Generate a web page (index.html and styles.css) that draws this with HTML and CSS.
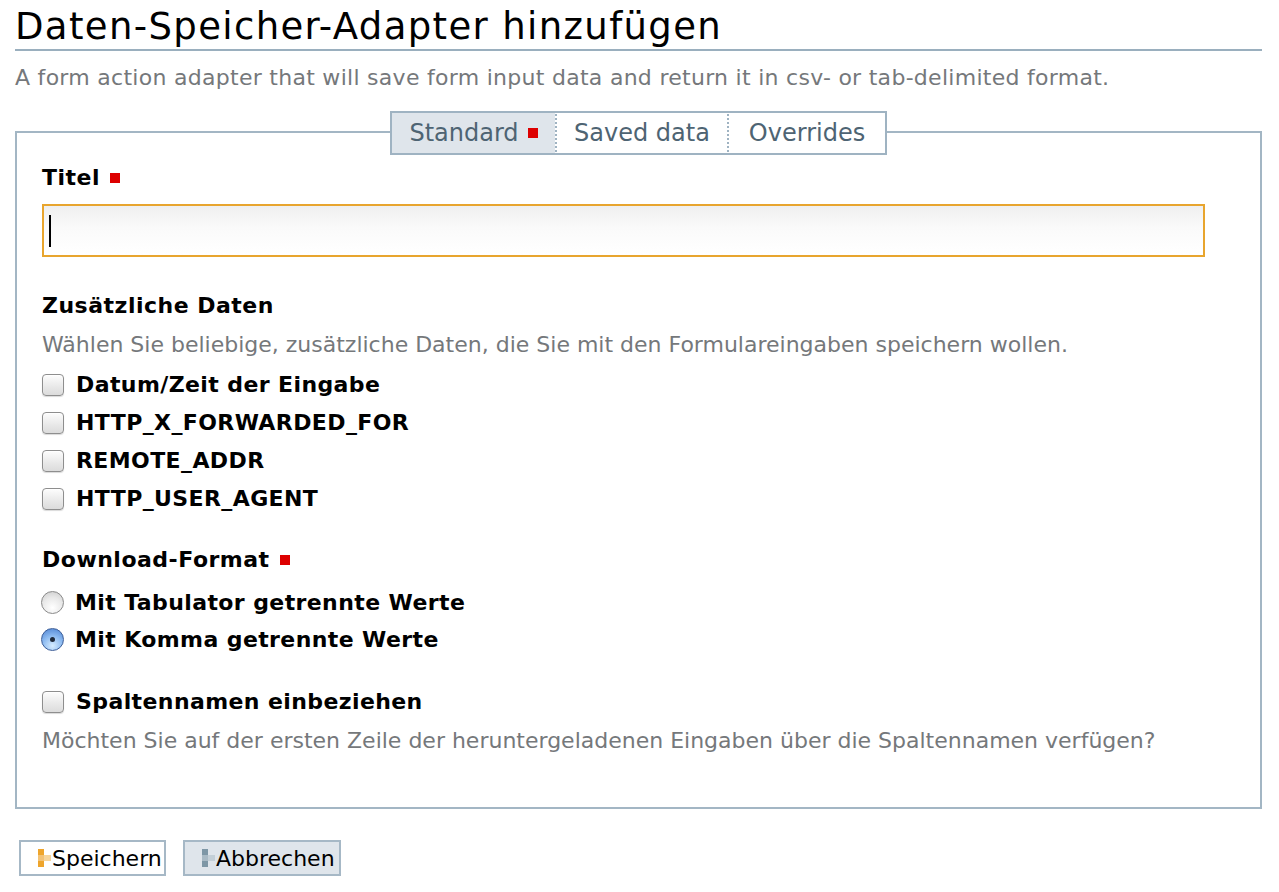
FILE: index.html
```html
<!DOCTYPE html>
<html lang="de">
<head>
<meta charset="utf-8">
<title>Daten-Speicher-Adapter hinzufügen</title>
<link rel="stylesheet" href="styles.css">
</head>
<body>
<h1 class="title">Daten-Speicher-Adapter hinzufügen</h1>
<p class="desc">A form action adapter that will save form input data and return it in csv- or tab-delimited format.</p>

<div class="panel">
  <div class="tabs">
    <span class="tab active">Standard<span class="req"></span></span>
    <span class="tab">Saved data</span>
    <span class="tab">Overrides</span>
  </div>

  <div class="field first">
    <label class="label">Titel <span class="req"></span></label>
    <div class="input"><span class="caret"></span></div>
  </div>

  <div class="field extra">
    <div class="label">Zusätzliche Daten</div>
    <div class="help">Wählen Sie beliebige, zusätzliche Daten, die Sie mit den Formulareingaben speichern wollen.</div>
    <div class="opts">
      <label class="opt"><span class="cb"></span>Datum/Zeit der Eingabe</label>
      <label class="opt"><span class="cb"></span>HTTP_X_FORWARDED_FOR</label>
      <label class="opt"><span class="cb"></span>REMOTE_ADDR</label>
      <label class="opt"><span class="cb"></span>HTTP_USER_AGENT</label>
    </div>
  </div>

  <div class="field format">
    <div class="label">Download-Format <span class="req"></span></div>
    <div class="opts radios">
      <label class="opt"><span class="rb"></span>Mit Tabulator getrennte Werte</label>
      <label class="opt"><span class="rb on"></span>Mit Komma getrennte Werte</label>
    </div>
  </div>

  <div class="field cols">
    <label class="opt"><span class="cb"></span>Spaltennamen einbeziehen</label>
    <div class="help">Möchten Sie auf der ersten Zeile der heruntergeladenen Eingaben über die Spaltennamen verfügen?</div>
  </div>
</div>

<div class="buttons">
  <button class="btn save">
    <svg class="ico" width="13" height="18" viewBox="0 0 13 18"><rect x="0" y="0" width="6" height="6" fill="#eea52c"/><rect x="0" y="6" width="6" height="6" fill="#f3c274"/><rect x="6" y="6" width="7" height="6" fill="#f6d59c"/><rect x="0" y="12" width="6" height="6" fill="#eea52c"/></svg>Speichern</button>
  <button class="btn cancel">
    <svg class="ico" width="13" height="18" viewBox="0 0 13 18"><rect x="0" y="0" width="6" height="6" fill="#7e97a6"/><rect x="0" y="6" width="6" height="6" fill="#a9bac5"/><rect x="6" y="6" width="7" height="6" fill="#c3cfd7"/><rect x="0" y="12" width="6" height="6" fill="#7e97a6"/></svg>Abbrechen</button>
</div>
</body>
</html>
```

FILE: styles.css
```css
html, body {
  margin: 0;
  padding: 0;
  background: #fff;
}
body {
  padding: 0 17px 0 15px;
  font-family: "DejaVu Sans", Verdana, sans-serif;
  color: #000;
}
.title {
  margin: 0;
  padding-top: 5px;
  font-weight: normal;
  font-size: 37px;
  line-height: 44px;
  letter-spacing: 1.37px;
  border-bottom: 2px solid #9aafbe;
}
.desc {
  margin: 14px 0 0 0;
  font-size: 22px;
  line-height: 26px;
  letter-spacing: 0.28px;
  color: #75787b;
}
.panel {
  margin-top: 40px;
  border: 2px solid #a3b6c4;
  padding: 0 25px 53px 25px;
  display: flex;
  flex-direction: column;
}
.tabs {
  display: flex;
  justify-content: center;
  margin-top: -22px;
}
.tab {
  display: flex;
  align-items: center;
  justify-content: center;
  height: 40px;
  border-top: 2px solid #9fb3c2;
  border-bottom: 2px solid #9fb3c2;
  background: #fff;
  font-size: 24px;
  color: #4e6473;
}
.tab:first-child { border-left: 2px solid #9fb3c2; }
.tab:last-child { border-right: 2px solid #9fb3c2; }
.tab + .tab { border-left: 2px dotted #9fb3c2; }
.tab.active { background: #dfe5eb; width: 163px; }
.tab:nth-child(2) { width: 170px; }
.tab:nth-child(3) { width: 156px; }
.tab .req { margin-left: 9px; top: 0; }
.req {
  display: inline-block;
  width: 10px;
  height: 10px;
  background: #dd0000;
  vertical-align: middle;
  position: relative;
  top: -1px;
}
.label {
  display: block;
  font-weight: bold;
  font-size: 22px;
  line-height: 28px;
  letter-spacing: 0.5px;
}
.label .req { margin-left: 2px; }
.field { display: flex; flex-direction: column; }
.first { margin-top: 9px; }
.first .label { margin-bottom: 12px; }
.input {
  width: 1154px;
  height: 49px;
  border: 2px solid #e8a52e;
  background: linear-gradient(#efefef, #fafafa 45%, #fff);
  display: flex;
  align-items: center;
  padding-left: 5px;
}
.caret {
  width: 2px;
  height: 32px;
  background: #000;
}
.extra { margin-top: 35px; }
.help {
  font-size: 22px;
  line-height: 26px;
  letter-spacing: 0;
  color: #75787b;
  margin-top: 12px;
}
.opts {
  display: flex;
  flex-direction: column;
  margin-top: 8px;
}
.opt {
  display: flex;
  align-items: center;
  font-weight: bold;
  font-size: 22px;
  letter-spacing: 0.4px;
  line-height: 38px;
  height: 38px;
}
.cb {
  width: 20px;
  height: 20px;
  border: 1px solid #8e8e8e;
  border-radius: 4px;
  background: linear-gradient(#fdfdfd, #e8e8e8 60%, #dcdcdc);
  box-shadow: inset 0 1px 1px #fff, 0 1px 1px rgba(0,0,0,0.15);
  margin-right: 12px;
  flex: none;
}
.rb {
  width: 23px;
  height: 23px;
  border: 1px solid #8a8a8a;
  border-radius: 50%;
  background: radial-gradient(circle at 50% 75%, #ffffff, #e8e8e8 55%, #c9c9c9);
  margin-left: -1px;
  margin-right: 11px;
  flex: none;
  box-sizing: border-box;
  position: relative;
}
.rb.on {
  border-color: #3d5e98;
  background: radial-gradient(circle at 50% 80%, #d6ecff, #8cbaf0 50%, #4a7fcf);
}
.rb.on::after {
  content: "";
  position: absolute;
  left: 8px;
  top: 8px;
  width: 5px;
  height: 5px;
  border-radius: 50%;
  background: #1f2a3a;
}
.format { margin-top: 28px; }
.radios { margin-top: 10px; }
.radios .opt { height: 37px; line-height: 37px; }
.cols { margin-top: 25px; }
.cols .help { margin-top: 7px; }
.buttons {
  display: flex;
  gap: 17px;
  margin-top: 31px;
  padding-left: 4px;
}
.btn {
  display: flex;
  align-items: center;
  height: 36px;
  border: 2px solid #a6b8c6;
  background: #fff;
  font-family: "DejaVu Sans", Verdana, sans-serif;
  font-size: 22px;
  color: #000;
  padding: 0 0 0 17px;
  margin: 0;
  box-sizing: border-box;
  white-space: nowrap;
}
.btn.save { width: 147px; }
.btn.cancel { width: 158px; background: #dfe5eb; }
.ico { flex: none; margin-right: 1px; }
```
